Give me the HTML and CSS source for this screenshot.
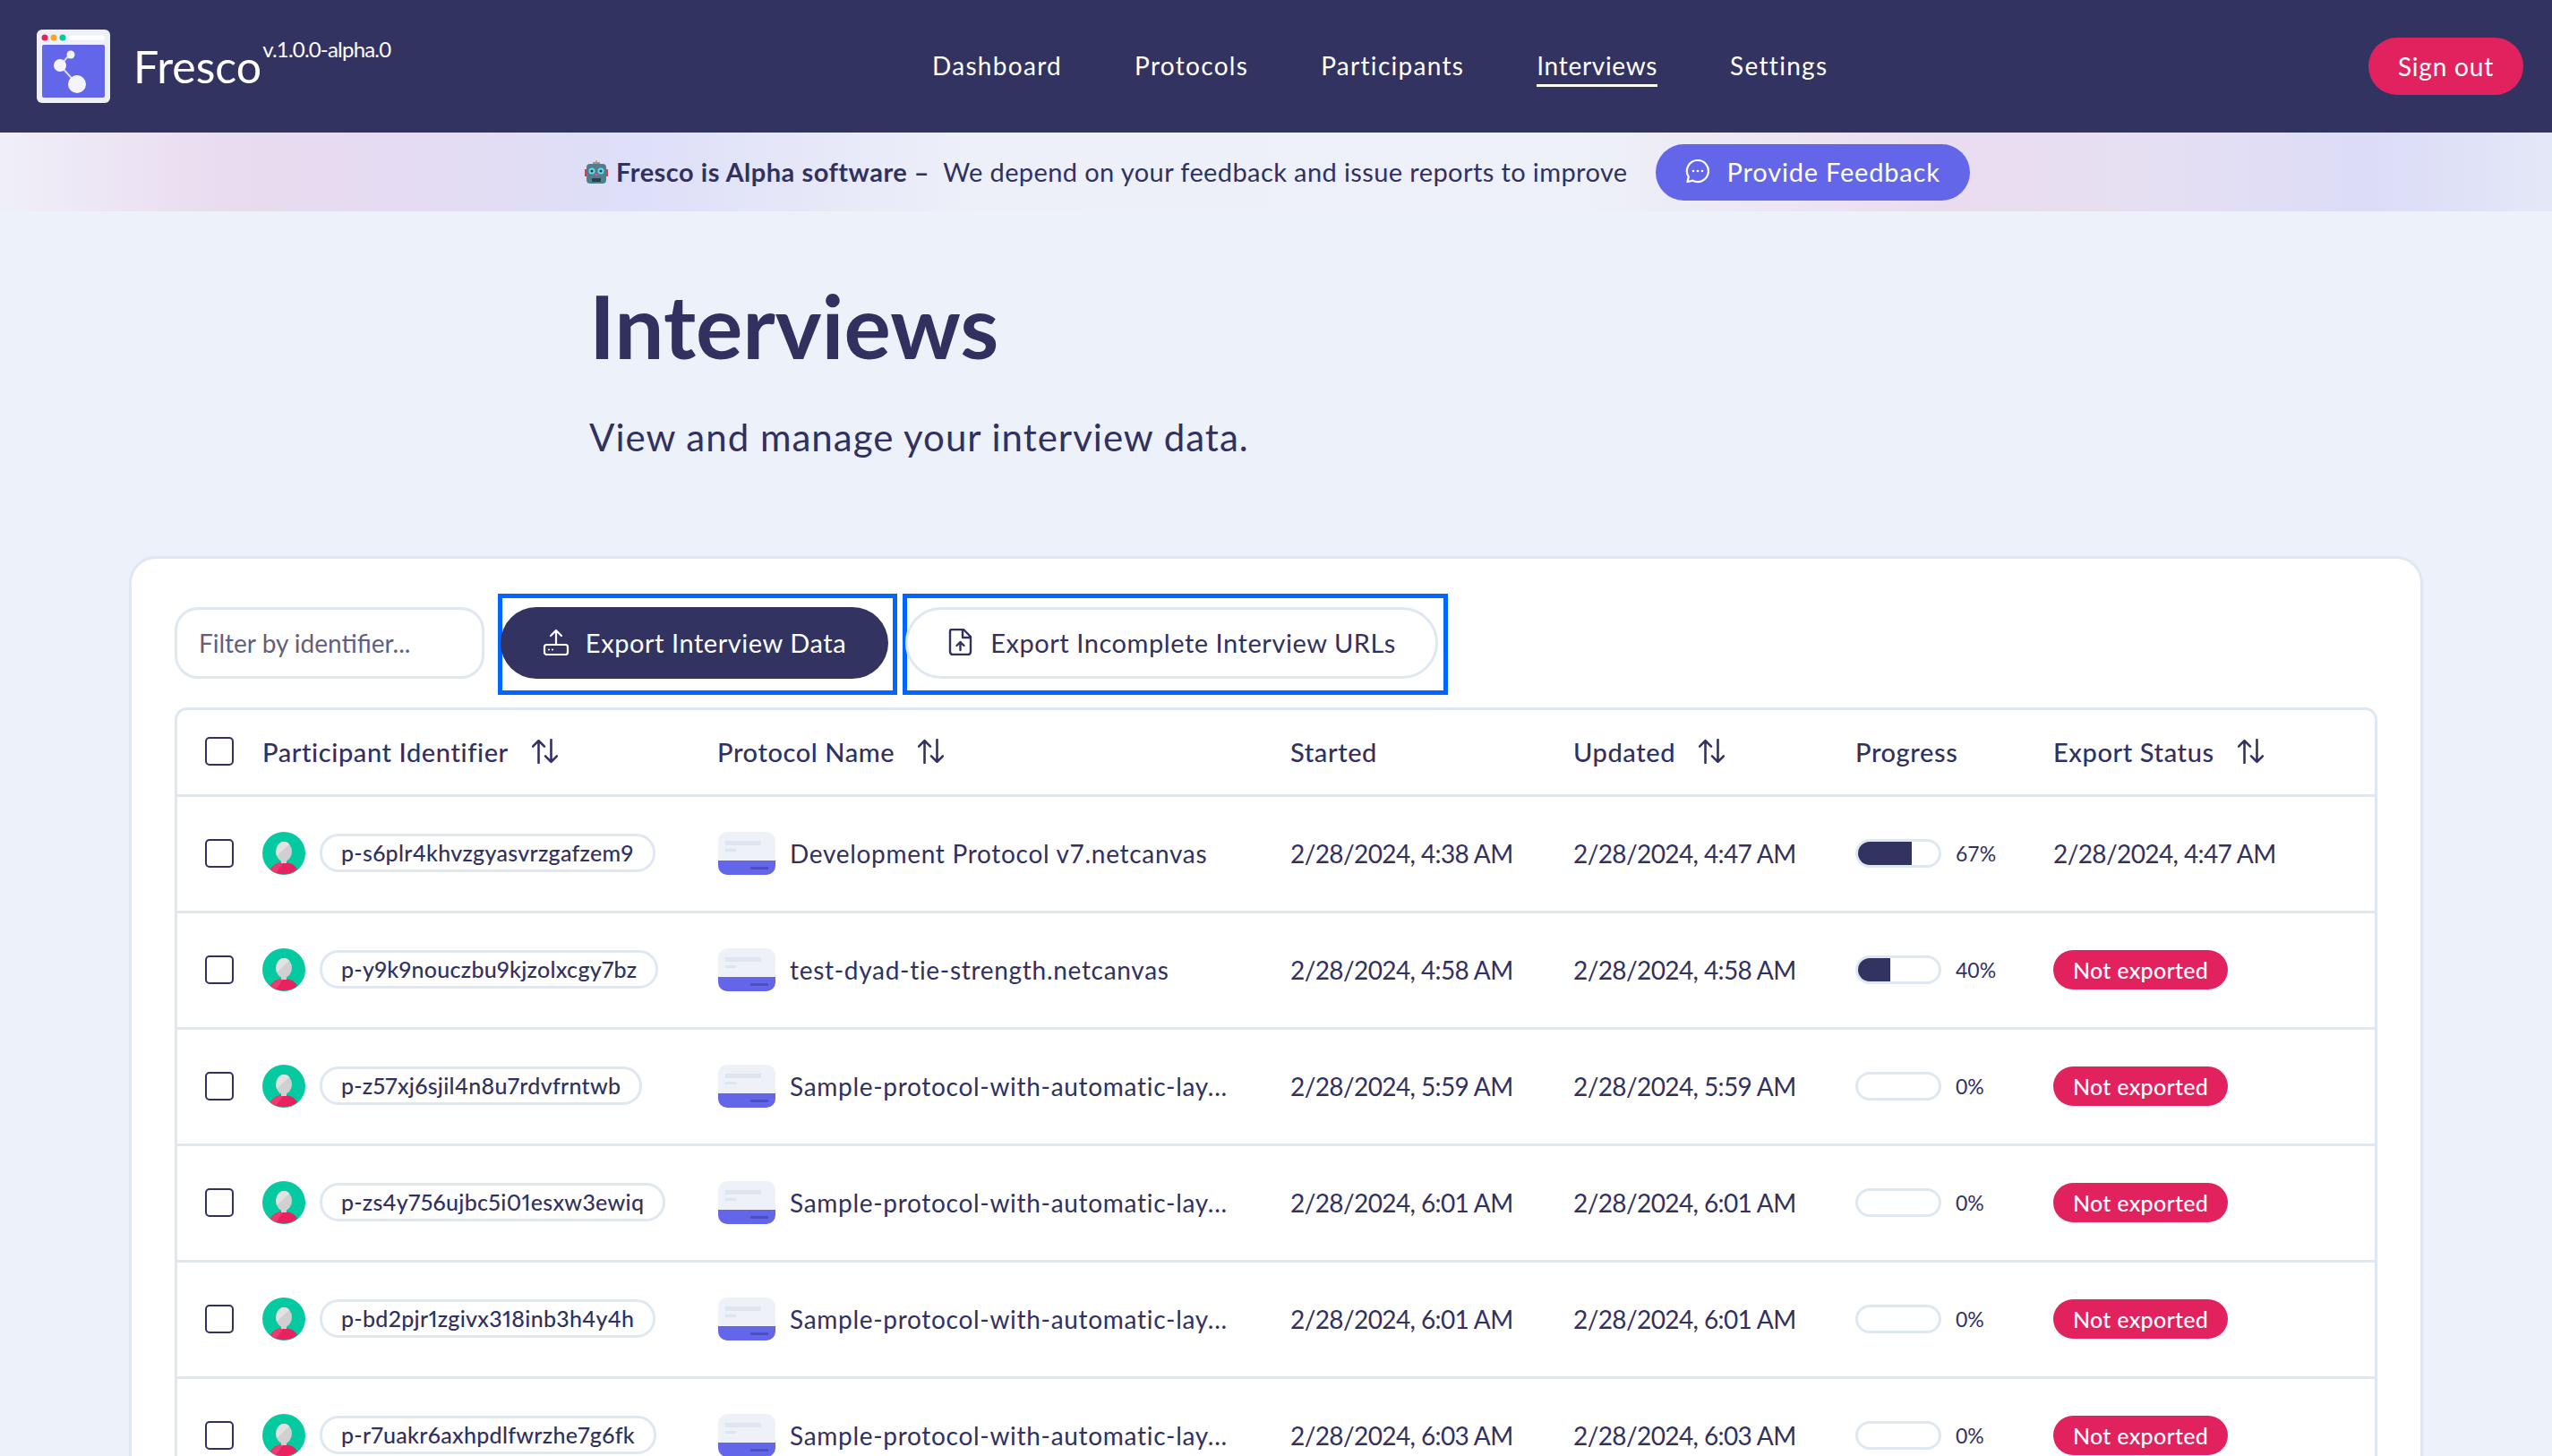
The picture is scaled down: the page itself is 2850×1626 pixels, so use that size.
FILE: index.html
```html
<!DOCTYPE html>
<html lang="en">
<head>
    <meta charset="UTF-8">
    <meta name="viewport" content="width=device-width, initial-scale=1.0">
    <title>Interviews - Fresco</title>
    <link rel="stylesheet" href="styles.css">
</head>
<body>
    <svg class="defs" width="0" height="0">
        <symbol id="sort" viewBox="0 0 27 26">
            <path d="M7 25V2M1 8l6-6 6 6M20 1v23M14 18l6 6 6-6" fill="none" stroke="currentColor" stroke-width="2.4" stroke-linecap="round" stroke-linejoin="round"/>
        </symbol>
        <symbol id="avatar" viewBox="0 0 48 48">
            <circle cx="24" cy="24" r="24" fill="#05c9a1"/>
            <path d="M9 42c3-6 9-8 15-8s12 2 15 8a24 24 0 0 1-30 0z" fill="#e8225f"/>
            <path d="M9 42c3-6 9-8 15-8l-9 12a24 24 0 0 1-6-4z" fill="#ee3a70"/>
            <ellipse cx="24" cy="22" rx="9" ry="11" fill="#d0d0d0"/>
            <path d="M16 27c-2-8 2-16 8-16 3 0 5 1 6 3z" fill="#e2e2e2"/>
            <rect x="21" y="30" width="6" height="5" fill="#d0d0d0"/>
        </symbol>
        <symbol id="protocol" viewBox="0 0 64 48">
            <path d="M10 0h44a10 10 0 0 1 10 10v22H0V10A10 10 0 0 1 10 0z" fill="#eef1f8"/>
            <rect x="8" y="10" width="40" height="5" fill="#dfe5f0"/>
            <rect x="8" y="19" width="12" height="3" fill="#dfe5f0"/>
            <path d="M0 32h64v6a10 10 0 0 1-10 10H10A10 10 0 0 1 0 38z" fill="#6366e9"/>
            <rect x="36" y="39" width="20" height="3" fill="#4c4fc4"/>
        </symbol>
    </svg>

    <header class="topbar">
        <div class="brand">
            <svg class="brand-logo" viewBox="0 0 82 82">
                <rect width="82" height="82" rx="6" fill="#eef1f8"/>
                <rect x="6" y="17" width="70" height="59" rx="2" fill="#6366e9"/>
                <circle cx="9" cy="9" r="3.5" fill="#e8225f"/>
                <circle cx="19" cy="9" r="3.5" fill="#f5a623"/>
                <circle cx="29" cy="9" r="3.5" fill="#05c9a1"/>
                <rect x="36" y="6.500" width="40" height="5" rx="2.500" fill="#fff"/>
                <path d="M37 28L26 40 45 61" fill="none" stroke="#d5d9f2" stroke-width="2"/>
                <circle cx="38" cy="28" r="4.500" fill="#f4f5fb"/>
                <circle cx="26" cy="40" r="7" fill="#f4f5fb"/>
                <circle cx="45" cy="61" r="10" fill="#f4f5fb"/>
            </svg>
            <span class="brand-name">Fresco</span>
            <span class="brand-version">v.1.0.0-alpha.0</span>
        </div>
        <nav class="topnav">
            <a href="#">Dashboard</a>
            <a href="#">Protocols</a>
            <a href="#">Participants</a>
            <a href="#" class="active">Interviews</a>
            <a href="#">Settings</a>
        </nav>
        <button type="button" class="signout">Sign out</button>
    </header>

    <div class="banner">
        <svg class="robot" viewBox="0 0 26 26">
            <rect x="12" y="0" width="2" height="3" fill="#f5a623"/>
            <rect x="9" y="2" width="8" height="3" fill="#8a9aa5"/>
            <rect x="0" y="10" width="3" height="8" fill="#d9404f"/>
            <rect x="23" y="10" width="3" height="8" fill="#d9404f"/>
            <rect x="2" y="4" width="22" height="22" rx="4" fill="#4f7f8c"/>
            <circle cx="8" cy="12" r="3.500" fill="#5fe0ea"/>
            <circle cx="18" cy="12" r="3.500" fill="#5fe0ea"/>
            <circle cx="8" cy="12" r="1.600" fill="#24424d"/>
            <circle cx="18" cy="12" r="1.600" fill="#24424d"/>
            <rect x="8" y="20" width="10" height="4" rx="1" fill="#24424d"/>
            <path d="M11 15h4l-2 3z" fill="#e8508a"/>
        </svg>
        <strong class="banner-title">Fresco is Alpha software –</strong>
        <span class="banner-text">We depend on your feedback and issue reports to improve</span>
        <button type="button" class="feedback">
            <svg class="feedback-icon" viewBox="0 0 28 28">
                <path d="M14 2a12 12 0 1 1-5.500 22.700L2.500 26l1.300-5.500A12 12 0 0 1 14 2z" fill="none" stroke="currentColor" stroke-width="2.200" stroke-linejoin="round"/>
                <circle cx="9" cy="14" r="1.300" fill="currentColor"/>
                <circle cx="14" cy="14" r="1.300" fill="currentColor"/>
                <circle cx="19" cy="14" r="1.300" fill="currentColor"/>
            </svg>
            Provide Feedback
        </button>
    </div>

    <section class="hero">
        <h1>Interviews</h1>
        <p>View and manage your interview data.</p>
    </section>

    <main class="card">
        <div class="toolbar">
            <input type="text" class="filter" placeholder="Filter by identifier...">
            <div class="frame frame-dark">
                <button type="button" class="btn btn-dark">
                    <svg class="btn-icon" viewBox="0 0 30 30">
                        <path d="M15 18V2M9 8l6-6 6 6" fill="none" stroke="currentColor" stroke-width="2.200" stroke-linecap="round" stroke-linejoin="round"/>
                        <rect x="2" y="18" width="26" height="11" rx="2.500" fill="none" stroke="currentColor" stroke-width="2.200"/>
                        <circle cx="7" cy="23.500" r="1.100" fill="currentColor"/>
                        <circle cx="11" cy="23.500" r="1.100" fill="currentColor"/>
                    </svg>
                    Export Interview Data
                </button>
            </div>
            <div class="frame frame-light">
                <button type="button" class="btn btn-light">
                    <svg class="btn-icon" viewBox="0 0 30 30">
                        <path d="M5 1h13l8 8v17a3 3 0 0 1-3 3H6a3 3 0 0 1-3-3V3a2 2 0 0 1 2-2zM17 1v9h9" fill="none" stroke="currentColor" stroke-width="2.400" stroke-linejoin="round"/>
                        <path d="M14.500 24v-9M10.500 19l4-4 4 4" fill="none" stroke="currentColor" stroke-width="2.400" stroke-linecap="round" stroke-linejoin="round"/>
                    </svg>
                    Export Incomplete Interview URLs
                </button>
            </div>
        </div>

        <div class="table-wrap">
            <table class="data">
                <colgroup>
                    <col class="col-check">
                    <col class="col-id">
                    <col class="col-protocol">
                    <col class="col-started">
                    <col class="col-updated">
                    <col class="col-progress">
                    <col class="col-status">
                </colgroup>
                <thead>
                    <tr>
                        <th class="cell-check"><span class="checkbox"></span></th>
                        <th><span class="th-label">Participant Identifier <svg class="sort"><use href="#sort"/></svg></span></th>
                        <th><span class="th-label">Protocol Name <svg class="sort"><use href="#sort"/></svg></span></th>
                        <th>Started</th>
                        <th><span class="th-label">Updated <svg class="sort"><use href="#sort"/></svg></span></th>
                        <th>Progress</th>
                        <th><span class="th-label">Export Status <svg class="sort"><use href="#sort"/></svg></span></th>
                    </tr>
                </thead>
                <tbody>
                    <tr>
                        <td class="cell-check"><span class="checkbox"></span></td>
                        <td><div class="participant"><svg class="avatar"><use href="#avatar"/></svg><span class="pill">p-s6plr4khvzgyasvrzgafzem9</span></div></td>
                        <td><div class="protocol"><svg class="protocol-icon"><use href="#protocol"/></svg><span>Development Protocol v7.netcanvas</span></div></td>
                        <td class="date">2/28/2024, 4:38 AM</td>
                        <td class="date">2/28/2024, 4:47 AM</td>
                        <td><div class="progress"><span class="track"><span class="fill" style="width: 67%"></span></span><span class="pct">67%</span></div></td>
                        <td class="date">2/28/2024, 4:47 AM</td>
                    </tr>
                    <tr>
                        <td class="cell-check"><span class="checkbox"></span></td>
                        <td><div class="participant"><svg class="avatar"><use href="#avatar"/></svg><span class="pill">p-y9k9nouczbu9kjzolxcgy7bz</span></div></td>
                        <td><div class="protocol"><svg class="protocol-icon"><use href="#protocol"/></svg><span>test-dyad-tie-strength.netcanvas</span></div></td>
                        <td class="date">2/28/2024, 4:58 AM</td>
                        <td class="date">2/28/2024, 4:58 AM</td>
                        <td><div class="progress"><span class="track"><span class="fill" style="width: 40%"></span></span><span class="pct">40%</span></div></td>
                        <td><span class="badge">Not exported</span></td>
                    </tr>
                    <tr>
                        <td class="cell-check"><span class="checkbox"></span></td>
                        <td><div class="participant"><svg class="avatar"><use href="#avatar"/></svg><span class="pill">p-z57xj6sjil4n8u7rdvfrntwb</span></div></td>
                        <td><div class="protocol"><svg class="protocol-icon"><use href="#protocol"/></svg><span>Sample-protocol-with-automatic-lay...</span></div></td>
                        <td class="date">2/28/2024, 5:59 AM</td>
                        <td class="date">2/28/2024, 5:59 AM</td>
                        <td><div class="progress"><span class="track"></span><span class="pct">0%</span></div></td>
                        <td><span class="badge">Not exported</span></td>
                    </tr>
                    <tr>
                        <td class="cell-check"><span class="checkbox"></span></td>
                        <td><div class="participant"><svg class="avatar"><use href="#avatar"/></svg><span class="pill">p-zs4y756ujbc5i01esxw3ewiq</span></div></td>
                        <td><div class="protocol"><svg class="protocol-icon"><use href="#protocol"/></svg><span>Sample-protocol-with-automatic-lay...</span></div></td>
                        <td class="date">2/28/2024, 6:01 AM</td>
                        <td class="date">2/28/2024, 6:01 AM</td>
                        <td><div class="progress"><span class="track"></span><span class="pct">0%</span></div></td>
                        <td><span class="badge">Not exported</span></td>
                    </tr>
                    <tr>
                        <td class="cell-check"><span class="checkbox"></span></td>
                        <td><div class="participant"><svg class="avatar"><use href="#avatar"/></svg><span class="pill">p-bd2pjr1zgivx318inb3h4y4h</span></div></td>
                        <td><div class="protocol"><svg class="protocol-icon"><use href="#protocol"/></svg><span>Sample-protocol-with-automatic-lay...</span></div></td>
                        <td class="date">2/28/2024, 6:01 AM</td>
                        <td class="date">2/28/2024, 6:01 AM</td>
                        <td><div class="progress"><span class="track"></span><span class="pct">0%</span></div></td>
                        <td><span class="badge">Not exported</span></td>
                    </tr>
                    <tr>
                        <td class="cell-check"><span class="checkbox"></span></td>
                        <td><div class="participant"><svg class="avatar"><use href="#avatar"/></svg><span class="pill">p-r7uakr6axhpdlfwrzhe7g6fk</span></div></td>
                        <td><div class="protocol"><svg class="protocol-icon"><use href="#protocol"/></svg><span>Sample-protocol-with-automatic-lay...</span></div></td>
                        <td class="date">2/28/2024, 6:03 AM</td>
                        <td class="date">2/28/2024, 6:03 AM</td>
                        <td><div class="progress"><span class="track"></span><span class="pct">0%</span></div></td>
                        <td><span class="badge">Not exported</span></td>
                    </tr>
                </tbody>
            </table>
        </div>
    </main>
</body>
</html>
```

FILE: styles.css
```css
html {
    height: 100%;
    overflow: hidden;
}
body {
    font-family: Lato, "Noto Sans", sans-serif;
    background-color: #edf1f9;
    color: #31315f;
    margin: 0;
    height: 100%;
    overflow: hidden;
}
button {
    font-family: inherit;
    cursor: pointer;
}
.defs {
    position: absolute;
}

.topbar {
    display: grid;
    grid-template-columns: 1000px 1fr auto;
    align-items: center;
    height: 148px;
    padding: 0 32px 0 41px;
    background-color: #333362;
    color: #ffffff;
}
.brand {
    display: flex;
    align-items: flex-start;
}
.brand-logo {
    width: 82px;
    height: 82px;
}
.brand-name {
    margin: 11px 0 0 26px;
    font-size: 50px;
    line-height: 60px;
}
.brand-version {
    margin: 7px 0 0 1px;
    font-size: 24px;
    line-height: 30px;
    letter-spacing: -0.8px;
}
.topnav {
    display: flex;
    gap: 81px;
}
.topnav a {
    padding: 4px 0;
    border-bottom: 3px solid transparent;
    color: #ffffff;
    font-size: 28px;
    letter-spacing: 1.3px;
    text-decoration: none;
}
.topnav a.active {
    border-bottom-color: #ffffff;
    letter-spacing: 0.7px;
}
.signout {
    height: 64px;
    width: 173px;
    border: none;
    border-radius: 32px;
    background-color: #e2225e;
    color: #ffffff;
    font-size: 28px;
    letter-spacing: 0.8px;
}

.banner {
    display: flex;
    align-items: center;
    height: 88px;
    padding-left: 653px;
    background: linear-gradient(90deg, #f0eff8 0%, #e9dbf0 9%, #e3dcf3 18%, #dedff9 25%, #edf0f8 38%, #eef1f8 62%, #eadcf0 76%, #e6dff2 84%, #dcdcf7 93%, #e3e8f8 100%);
}
.robot {
    width: 26px;
    height: 26px;
    margin-right: 9px;
}
.banner-title {
    margin-bottom: 2px;
    font-size: 29px;
    font-weight: 700;
    letter-spacing: 0.5px;
}
.banner-text {
    margin: 0 0 2px 15px;
    font-size: 29px;
    letter-spacing: 0.4px;
}
.feedback {
    display: flex;
    align-items: center;
    gap: 19px;
    width: 351px;
    height: 63px;
    margin-left: 31px;
    padding: 0 0 2px 33px;
    border: none;
    border-radius: 32px;
    background-color: #6366e9;
    color: #ffffff;
    font-size: 29px;
    letter-spacing: 0.8px;
}
.feedback-icon {
    width: 28px;
    height: 28px;
}

.hero {
    width: 1534px;
    margin: 0 auto;
    padding-top: 69px;
    height: 385px;
    box-sizing: border-box;
}
.hero h1 {
    margin: 0;
    font-size: 98px;
    line-height: 116px;
    font-weight: 700;
}
.hero p {
    margin: 42px 0 0;
    font-size: 42px;
    line-height: 50px;
    letter-spacing: 1px;
}

.card {
    margin: 0 144px;
    padding: 54px 48px 48px;
    border: 3px solid #dfe7f2;
    border-bottom: none;
    border-radius: 30px 30px 0 0;
    background-color: #ffffff;
}
.toolbar {
    display: flex;
    align-items: flex-start;
    gap: 6px;
    height: 80px;
    margin-bottom: 32px;
}
.filter {
    width: 346px;
    height: 80px;
    box-sizing: border-box;
    margin-right: 9px;
    padding: 0 24px;
    border: 3px solid #dfe7f2;
    border-radius: 26px;
    font-family: inherit;
    font-size: 28px;
    color: #31315f;
}
.filter::placeholder {
    color: #5f607f;
    opacity: 1;
}
.frame {
    height: 113px;
    box-sizing: border-box;
    margin-top: -15px;
    padding-top: 10px;
    border: 5px solid #0066ff;
}
.frame-dark {
    padding-right: 5px;
}
.frame-light {
    padding-right: 6px;
}
.btn {
    display: flex;
    align-items: center;
    justify-content: center;
    gap: 18px;
    height: 80px;
    box-sizing: border-box;
    padding: 0 0 2px;
    border-radius: 40px;
    font-size: 29px;
    letter-spacing: 0.55px;
}
.btn-dark {
    width: 433px;
    margin-left: -2px;
    border: none;
    background-color: #333362;
    color: #ffffff;
}
.btn-light {
    width: 595px;
    margin-left: -2px;
    border: 3px solid #dfe7f2;
    background-color: #ffffff;
    color: #31315f;
}
.btn-icon {
    width: 30px;
    height: 30px;
}

.table-wrap {
    border: 3px solid #dfe7f2;
    border-bottom: none;
    border-radius: 14px 14px 0 0;
}
.data {
    width: 100%;
    table-layout: fixed;
    border-collapse: collapse;
}
.col-check { width: 95px; }
.col-id { width: 508px; }
.col-protocol { width: 640px; }
.col-started { width: 316px; }
.col-updated { width: 315px; }
.col-progress { width: 221px; }
.data th {
    height: 92px;
    padding: 0 0 2px;
    border-bottom: 3px solid #dfe7f2;
    font-size: 29px;
    font-weight: 500;
    letter-spacing: 0.6px;
    text-align: left;
}
.data td {
    height: 125px;
    padding: 0 0 2px;
    border-bottom: 3px solid #dfe7f2;
    font-size: 28px;
    white-space: nowrap;
}
.data td.date {
    letter-spacing: -0.6px;
}
.data th.cell-check,
.data td.cell-check {
    padding-left: 31px;
}
.th-label {
    display: inline-flex;
    align-items: center;
    gap: 26px;
}
.sort {
    width: 29px;
    height: 28px;
}
.checkbox {
    display: block;
    width: 32px;
    height: 32px;
    box-sizing: border-box;
    border: 2.5px solid #31315f;
    border-radius: 5px;
}
.participant,
.protocol {
    display: flex;
    align-items: center;
}
.avatar {
    width: 48px;
    height: 48px;
    flex-shrink: 0;
}
.pill {
    margin-left: 16px;
    padding: 0 21px;
    line-height: 37px;
    border: 3px solid #dfe7f2;
    border-radius: 21px;
    font-size: 25px;
    font-weight: 500;
    font-variant-numeric: proportional-nums;
    letter-spacing: 0.3px;
}
.protocol-icon {
    width: 64px;
    height: 48px;
    flex-shrink: 0;
    margin: 0 16px 0 1px;
}
.protocol span {
    letter-spacing: 0.7px;
}
.progress {
    display: flex;
    align-items: center;
    gap: 16px;
}
.track {
    display: block;
    width: 96px;
    height: 32px;
    box-sizing: border-box;
    border: 3px solid #dfe7f2;
    border-radius: 16px;
    overflow: hidden;
}
.fill {
    display: block;
    height: 100%;
    background-color: #333362;
}
.pct {
    font-size: 23px;
}
.badge {
    display: inline-block;
    padding: 0 22px;
    line-height: 44px;
    border-radius: 22px;
    background-color: #e2225e;
    color: #ffffff;
    font-size: 25px;
    font-weight: 500;
    letter-spacing: 0.3px;
}
```
